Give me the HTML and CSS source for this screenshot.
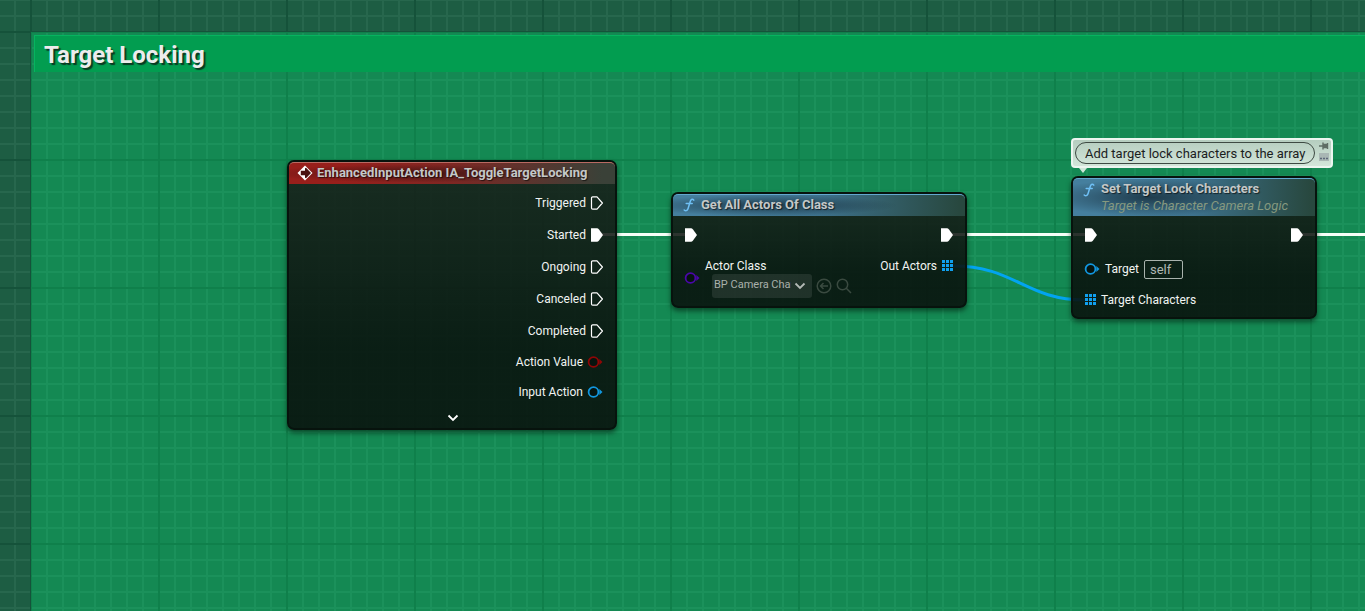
FILE: index.html
```html
<!DOCTYPE html>
<html lang="en">
<head>
<meta charset="utf-8">
<meta name="viewport" content="width=device-width, initial-scale=1">
<title>Target Locking</title>
<link rel="stylesheet" href="styles.css">
</head>
<body>
<svg class="defs" width="0" height="0" aria-hidden="true">
  <symbol id="exec" viewBox="0 0 14 16"><path d="M1.500 3a1.200 1.200 0 0 1 1.200-1.200H7L12.400 8 7 14.200H2.700A1.200 1.200 0 0 1 1.500 13z" fill="none" stroke="#fff" stroke-width="1.200" stroke-linejoin="round"/></symbol>
  <symbol id="exec-on" viewBox="0 0 14 16"><path d="M1 1.300h6Q8 1.300 9 2.500L13 8 9 13.500Q8 14.700 7 14.700H1z" fill="#fff"/></symbol>
  <symbol id="pin" viewBox="0 0 16 14"><circle cx="6.500" cy="7" r="4.900" fill="#06140f" stroke="currentColor" stroke-width="1.800"/><path d="M12.300 4 15.500 7l-3.200 3z" fill="currentColor"/></symbol>
  <symbol id="array" viewBox="0 0 12 12"><path d="M1 0h3v3H1zM5 0h3v3H5zM9 0h3v3H9zM1 4h3v3H1zM5 4h3v3H5zM9 4h3v3H9zM1 8h3v3H1zM5 8h3v3H5zM9 8h3v3H9z" fill="currentColor"/></symbol>
  <symbol id="func" viewBox="0 0 12 14"><path d="M10.800 2.200C9.800.600 8.100 1 7.400 3L5 10.800C4.400 12.800 2.600 13.200 1.200 12M3.200 5.400h6" fill="none" stroke="#6fc0f5" stroke-width="1.500" stroke-linecap="round"/></symbol>
  <symbol id="chevron" viewBox="0 0 12 8"><path d="m1.500 1.500 4.500 4.500 4.500-4.500" fill="none" stroke="currentColor" stroke-width="1.800"/></symbol>
</svg>
<main class="canvas">
  <section class="comment"><h1 class="comment-title">Target Locking</h1></section>

  <svg class="wires" aria-hidden="true">
    <g fill="none" stroke-width="3">
      <path d="M602 234.500H686M952 234.500H1086M1302 234.500H4000" stroke="#f6fff8"/>
      <path d="M953 266C1015 266 1025 300 1085 300" stroke="#02a4f0"/>
    </g>
  </svg>

  <article class="node node-event">
    <header class="node-head head-event">
      <svg class="event-icon" viewBox="0 0 16 16" aria-hidden="true"><path d="M8 .500 15.500 8 8 15.500.500 8z" fill="#fff"/><path d="M8 3.200 9 2.800 14 8l-5 5.200-1-.400V10.300H3.800V5.700H8z" fill="#4a1211"/></svg>
      <h2 class="node-title">EnhancedInputAction IA_ToggleTargetLocking</h2>
    </header>
    <ul class="pins">
      <li class="row out">Triggered <svg class="exec"><use href="#exec"/></svg></li>
      <li class="row out">Started <svg class="exec"><use href="#exec-on"/></svg></li>
      <li class="row out">Ongoing <svg class="exec"><use href="#exec"/></svg></li>
      <li class="row out">Canceled <svg class="exec"><use href="#exec"/></svg></li>
      <li class="row out">Completed <svg class="exec"><use href="#exec"/></svg></li>
      <li class="row out data">Action Value <svg class="pin red"><use href="#pin"/></svg></li>
      <li class="row out data">Input Action <svg class="pin blue"><use href="#pin"/></svg></li>
    </ul>
    <button class="expand" aria-label="Show advanced pins"><svg class="chevron"><use href="#chevron"/></svg></button>
  </article>

  <article class="node node-get">
    <header class="node-head head-func">
      <svg class="func"><use href="#func"/></svg>
      <h2 class="node-title">Get All Actors Of Class</h2>
    </header>
    <div class="exec-row"><svg class="exec"><use href="#exec-on"/></svg><svg class="exec"><use href="#exec-on"/></svg></div>
    <div class="get-body">
      <svg class="pin purple"><use href="#pin"/></svg>
      <div class="class-pin">
        <label for="actor-class">Actor Class</label>
        <div class="class-tools">
          <span class="picker">
            <select id="actor-class"><option>BP Camera Character</option></select>
            <svg class="chevron"><use href="#chevron"/></svg>
          </span>
          <button class="tool" aria-label="Use selected asset"><svg viewBox="0 0 16 16"><circle cx="8" cy="8" r="6.800"/><path d="M12 8H4.500M7.500 5l-3 3 3 3"/></svg></button>
          <button class="tool" aria-label="Browse to asset"><svg viewBox="0 0 16 16"><circle cx="6.500" cy="6.500" r="5.200"/><path d="m10.300 10.300 4.700 4.700"/></svg></button>
        </div>
      </div>
      <div class="out-pin">Out Actors <svg class="array"><use href="#array"/></svg></div>
    </div>
  </article>

  <article class="node node-set">
    <header class="node-head head-func tall">
      <svg class="func"><use href="#func"/></svg>
      <div>
        <h2 class="node-title">Set Target Lock Characters</h2>
        <p class="node-sub">Target is Character Camera Logic</p>
      </div>
    </header>
    <div class="exec-row"><svg class="exec"><use href="#exec-on"/></svg><svg class="exec"><use href="#exec-on"/></svg></div>
    <div class="row in target"><svg class="pin blue"><use href="#pin"/></svg><label for="target">Target</label><input class="self" id="target" value="self"></div>
    <div class="row in"><svg class="array"><use href="#array"/></svg>Target Characters</div>
  </article>

  <aside class="bubble">
    <input class="bubble-text" aria-label="Node comment" value="Add target lock characters to the array">
    <div class="bubble-tools">
      <button class="mini" aria-label="Pin comment"><svg viewBox="0 0 10 8"><path d="M0 4h4M4 .500v7M4 2.500h4v3H4zM8.500 1v6" fill="#5f6d65" stroke="#5f6d65" stroke-width="1.400"/></svg></button>
      <button class="mini" aria-label="Toggle comment bubble"><svg viewBox="0 0 10 8"><path d="M0 0h10v8H0z" fill="#a9b7b4"/><path d="M1 5.500h2M4 5.500h2M7 5.500h2" stroke="#5d6879" stroke-width="1.600"/></svg></button>
    </div>
  </aside>
</main>
</body>
</html>
```
FILE: styles.css
```css
* { box-sizing: border-box; }
body {
  margin: 0;
  font: 12px/16px Roboto, "Noto Sans", sans-serif;
  color: #f1f4f2;
}
h1, h2, p, ul { margin: 0; padding: 0; }
ul { list-style: none; }
svg { display: block; flex: none; }
button { padding: 0; border: 0; background: none; color: inherit; }
.defs { position: absolute; }

.canvas, .comment {
  background-color: var(--base);
  background-image:
    linear-gradient(90deg, var(--major) 2px, transparent 2px),
    linear-gradient(var(--major) 2px, transparent 2px),
    linear-gradient(90deg, var(--minor) 2px, transparent 2px),
    linear-gradient(var(--minor) 2px, transparent 2px);
  background-size: 128px 128px, 128px 128px, 16px 16px, 16px 16px;
}
.canvas {
  --base: #1d5d43;
  --minor: #27674d;
  --major: #15523a;
  position: relative;
  min-height: 100vh;
  overflow: hidden;
  background-position: 30px 0, 0 31px, 14px 0, 0 15px;
}
.comment {
  --base: #148953;
  --minor: #1b915b;
  --major: #0f804b;
  position: absolute;
  inset: 32px 0 0 31px;
  padding: 3px 0 0 3px;
  background-position: -1px 0, 0 -1px, -1px 0, 0 -1px;
}
.comment-title {
  padding: 5px 9px 3px;
  border-top: 1px solid #06b45f;
  border-left: 1px solid #06b45f;
  background: #029d50;
  font-size: 24px;
  line-height: 28px;
  font-weight: 700;
  color: #ececec;
  text-shadow: 2px 2px 1px #0a3a22;
}
.wires { position: absolute; inset: 0; width: 100%; height: 100%; }

.node {
  position: absolute;
  border: 2px solid #07130d;
  border-radius: 7px;
  background: linear-gradient(rgba(25, 31, 26, .87), rgba(9, 17, 13, .89) 70%);
  box-shadow: 0 3px 5px rgba(0, 30, 15, .6);
}
.node-event { left: 287px; top: 160px; width: 330px; }
.node-get { left: 671px; top: 192px; width: 296px; padding-bottom: 8px; }
.node-set { left: 1071px; top: 176px; width: 246px; padding-bottom: 1px; }

.node-head {
  display: flex;
  align-items: center;
  gap: 4px;
  height: 22px;
  padding: 0 8px 2px;
  border-radius: 5px 5px 0 0;
}
.head-event {
  border-top: 1px solid #b96a63;
  background:
    radial-gradient(ellipse 150px 9px at 38% 50%, rgba(40, 12, 12, .7), transparent),
    linear-gradient(90deg, #981f1b 15%, #7e2723 50%, #3a4138 96%);
}
.head-func {
  gap: 6px;
  padding-left: 10px;
  border-top: 1px solid #62a9d0;
  background:
    radial-gradient(ellipse 45% 50% at 32% 50%, rgba(20, 40, 52, .75), transparent),
    linear-gradient(90deg, #457f9e 10%, #3d718c 50%, #28483f 98%);
}
.tall { height: 38px; align-items: flex-start; padding-top: 1px; }
.tall .func { margin-top: 3px; }
.node-title {
  font-size: 13px;
  line-height: 18px;
  font-weight: 700;
  color: #c4c8c8;
  white-space: nowrap;
  text-shadow: 1px 1px 1px rgba(0, 0, 0, .6);
}
.node-sub {
  line-height: 16px;
  font-size: 13px;
  font-style: italic;
  color: #86997f;
  white-space: nowrap;
}

.pins { padding-top: 3px; }
.row { display: flex; align-items: center; gap: 4px; height: 32px; white-space: nowrap; }
.out { justify-content: flex-end; padding-right: 11px; }
.data { height: 30px; padding-right: 12px; }
.in { gap: 5px; padding-left: 11px; }
.target { height: 30px; }
.expand { display: flex; justify-content: center; width: 100%; height: 21px; padding: 7px 0 0 2px; color: #fff; }
.exec-row { display: flex; justify-content: space-between; padding: 11px; }

.event-icon { width: 16px; height: 16px; }
.exec { width: 14px; height: 16px; }
.pin { width: 16px; height: 14px; }
.array { width: 12px; height: 12px; }
.func { width: 12px; height: 14px; }
.chevron { width: 12px; height: 8px; }
.red { color: #8f0606; }
.blue { color: #1297df; }
.purple { color: #4a07a8; }
.array { color: #10a0ef; }

.get-body { display: flex; align-items: flex-start; padding: 4px 12px 0 11px; }
.get-body .pin { margin-top: 13px; }
.class-pin { padding-left: 5px; }
.class-tools { display: flex; align-items: center; gap: 4px; padding-left: 7px; }
.picker { position: relative; width: 100px; height: 24px; }
.picker select {
  width: 100%;
  height: 24px;
  padding: 0 21px 2px 2px;
  border: 0;
  border-radius: 3px;
  appearance: none;
  background: rgba(255, 255, 255, .09);
  font: 11px/16px Roboto, "Noto Sans", sans-serif;
  color: #a9b0ab;
}
.picker .chevron { position: absolute; right: 6px; top: 8px; color: #b4bab6; pointer-events: none; }
.tool svg { width: 16px; height: 16px; fill: none; stroke: #3a4a40; stroke-width: 1.5; }
.out-pin { display: flex; align-items: center; gap: 4px; margin-left: auto; }

.self {
  width: 39px;
  height: 19px;
  padding: 0 5px;
  border: 1px solid #a9b3ad;
  border-radius: 2px;
  background: none;
  font: 13px/16px Roboto, "Noto Sans", sans-serif;
  color: #b0b8b3;
}

.bubble {
  position: absolute;
  left: 1071px;
  top: 138px;
  display: flex;
  gap: 4px;
  width: 262px;
  height: 30px;
  padding: 2px;
  border: 2px solid #edf5f0;
  border-radius: 4px;
  background: linear-gradient(#b5cdbf, #d3e6da);
}
.bubble::after {
  content: "";
  position: absolute;
  left: 6px;
  top: 28px;
  border: 4px solid transparent;
  border-top: 5px solid #cfe6d9;
}
.bubble-text {
  flex: 1;
  min-width: 0;
  height: 22px;
  padding: 0 8px 0 9px;
  border: 1px solid #3e4a43;
  border-radius: 11px;
  background: none;
  font: 13px/16px Roboto, "Noto Sans", sans-serif;
  color: #1b211d;
}
.bubble-tools { display: flex; flex-direction: column; gap: 3px; }
.mini svg { width: 10px; height: 8px; }
```
